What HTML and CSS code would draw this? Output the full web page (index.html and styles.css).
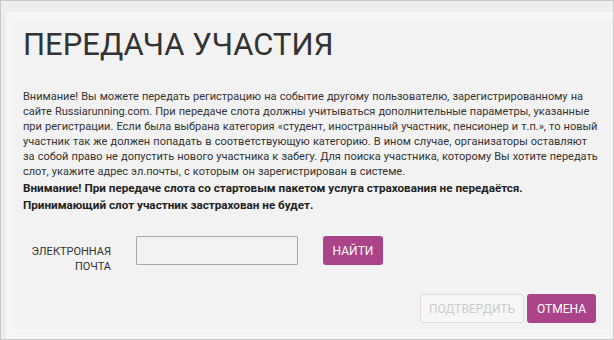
FILE: index.html
```html
<!DOCTYPE html>
<html lang="ru">
<head>
    <meta charset="UTF-8">
    <meta name="viewport" content="width=device-width, initial-scale=1.0">
    <title>Передача участия</title>
    <link rel="stylesheet" href="styles.css">
</head>
<body>
    <div class="frame">
        <div class="panel">
            <h1>ПЕРЕДАЧА УЧАСТИЯ</h1>
            <p class="note">Внимание! Вы можете передать регистрацию на событие другому пользователю, зарегистрированному на сайте Russiarunning.com. При передаче слота должны учитываться дополнительные параметры, указанные при регистрации. Если была выбрана категория «студент, иностранный участник, пенсионер и т.п.», то новый участник так же должен попадать в соответствующую категорию. В ином случае, организаторы оставляют за собой право не допустить нового участника к забегу. Для поиска участника, которому Вы хотите передать слот, укажите адрес эл.почты, с которым он зарегистрирован в системе.</p>
            <p class="warning">Внимание! При передаче слота со стартовым пакетом услуга страхования не передаётся. Принимающий слот участник застрахован не будет.</p>

            <div class="search-row">
                <label class="field-label" for="email">Электронная почта</label>
                <input type="text" id="email" class="field-input">
                <button class="btn btn-primary btn-find">Найти</button>
            </div>

            <div class="actions">
                <button class="btn btn-disabled" disabled>Подтвердить</button>
                <button class="btn btn-primary btn-cancel">Отмена</button>
            </div>
        </div>
    </div>
</body>
</html>
```

FILE: styles.css
```css
html, body {
    margin: 0;
}
body {
    font-family: Roboto, 'Liberation Sans', sans-serif;
    background: #eeeeee;
    color: #333;
    border: 1px solid #c8c8c8;
    box-sizing: border-box;
    height: 340px;
    padding: 11px 0 0 5px;
    overflow: hidden;
}
.frame {
    background: #f6f6f6;
    padding: 9px 0 10px 7px;
}
.panel {
    background: #f2f2f2;
    padding: 4px 12px 0 10px;
    height: 308px;
    box-sizing: border-box;
}
h1 {
    font-size: 31px;
    font-weight: 400;
    line-height: 40px;
    margin: 0 0 24px;
    color: #333;
}
.note {
    font-size: 11px;
    line-height: 15px;
    word-spacing: 0.4px;
    margin: 0;
    color: #333;
}
.warning {
    font-size: 11.7px;
    line-height: 17px;
    font-weight: 700;
    margin: 1px 0 0;
    color: #222;
}
.search-row {
    display: flex;
    align-items: flex-start;
    margin-top: 22px;
}
.field-label {
    width: 88px;
    text-align: right;
    text-transform: uppercase;
    font-size: 11px;
    line-height: 15px;
    color: #333;
    padding-top: 8px;
}
.field-input {
    width: 162px;
    height: 29px;
    box-sizing: border-box;
    margin: 0 0 0 25px;
    border: 1px solid #aaa;
    background: #f2f2f2;
    border-radius: 1px;
}
.btn {
    font-family: Roboto, 'Liberation Sans', sans-serif;
    font-size: 12px;
    text-transform: uppercase;
    border-radius: 3px;
    height: 29px;
    padding: 0;
    cursor: pointer;
}
.btn-primary {
    background: #aa4387;
    color: #fff;
    border: none;
}
.btn-find {
    margin-left: 25px;
    width: 60px;
}
.actions {
    display: flex;
    justify-content: flex-end;
    gap: 3px;
    margin-top: 20px;
    margin-right: 5px;
}
.btn-disabled {
    background: #f6f6f6;
    color: #ccc;
    border: 1px solid #ddd;
    width: 104px;
}
.btn-cancel {
    width: 69px;
}
```
